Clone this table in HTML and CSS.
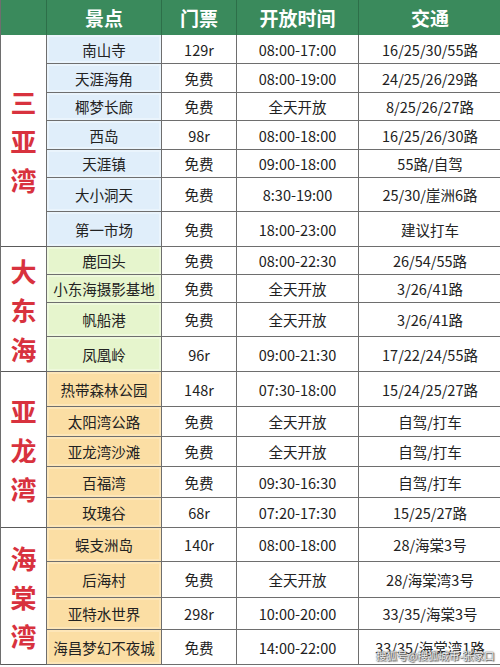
FILE: index.html
```html
<!DOCTYPE html>
<html lang="zh">
<head>
<meta charset="utf-8">
<link rel="stylesheet" href="styles.css">
</head>
<body>
<div class="page">
  <div class="table">
    <div class="hd"></div>
    <div class="hd">景点</div>
    <div class="hd">门票</div>
    <div class="hd">开放时间</div>
    <div class="hd last">交通</div>

    <div class="region span7">三<br>亚<br>湾</div>
    <div class="c blue">南山寺</div><div class="c">129r</div><div class="c">08:00-17:00</div><div class="c last">16/25/30/55路</div>
    <div class="c blue">天涯海角</div><div class="c">免费</div><div class="c">08:00-19:00</div><div class="c last">24/25/26/29路</div>
    <div class="c blue">椰梦长廊</div><div class="c">免费</div><div class="c">全天开放</div><div class="c last">8/25/26/27路</div>
    <div class="c blue">西岛</div><div class="c">98r</div><div class="c">08:00-18:00</div><div class="c last">16/25/26/30路</div>
    <div class="c blue">天涯镇</div><div class="c">免费</div><div class="c">09:00-18:00</div><div class="c last">55路/自驾</div>
    <div class="c blue">大小洞天</div><div class="c">免费</div><div class="c">8:30-19:00</div><div class="c last">25/30/崖洲6路</div>
    <div class="c blue">第一市场</div><div class="c">免费</div><div class="c">18:00-23:00</div><div class="c last">建议打车</div>

    <div class="region span4">大<br>东<br>海</div>
    <div class="c green">鹿回头</div><div class="c">免费</div><div class="c">08:00-22:30</div><div class="c last">26/54/55路</div>
    <div class="c green">小东海摄影基地</div><div class="c">免费</div><div class="c">全天开放</div><div class="c last">3/26/41路</div>
    <div class="c green">帆船港</div><div class="c">免费</div><div class="c">全天开放</div><div class="c last">3/26/41路</div>
    <div class="c green">凤凰岭</div><div class="c">96r</div><div class="c">09:00-21:30</div><div class="c last">17/22/24/55路</div>

    <div class="region span5">亚<br>龙<br>湾</div>
    <div class="c orange">热带森林公园</div><div class="c">148r</div><div class="c">07:30-18:00</div><div class="c last">15/24/25/27路</div>
    <div class="c orange">太阳湾公路</div><div class="c">免费</div><div class="c">全天开放</div><div class="c last">自驾/打车</div>
    <div class="c orange">亚龙湾沙滩</div><div class="c">免费</div><div class="c">全天开放</div><div class="c last">自驾/打车</div>
    <div class="c orange">百福湾</div><div class="c">免费</div><div class="c">09:30-16:30</div><div class="c last">自驾/打车</div>
    <div class="c orange">玫瑰谷</div><div class="c">68r</div><div class="c">07:20-17:30</div><div class="c last">15/25/27路</div>

    <div class="region span4">海<br>棠<br>湾</div>
    <div class="c orange">蜈支洲岛</div><div class="c">140r</div><div class="c">08:00-18:00</div><div class="c last">28/海棠3号</div>
    <div class="c orange">后海村</div><div class="c">免费</div><div class="c">全天开放</div><div class="c last">28/海棠湾3号</div>
    <div class="c orange">亚特水世界</div><div class="c">298r</div><div class="c">10:00-20:00</div><div class="c last">33/35/海棠3号</div>
    <div class="c orange">海昌梦幻不夜城</div><div class="c">免费</div><div class="c">14:00-22:00</div><div class="c last">33/35/海棠湾1路</div>
  </div>
  <div class="watermark">搜狐号@搜狐城市-张家口</div>
</div>
</body>
</html>
```

FILE: styles.css
```css
html, body {
  margin: 0;
  padding: 0;
  background: #ffffff;
}

.page {
  position: relative;
  width: 500px;
  height: 667px;
  overflow: hidden;
  font-family: "Noto Sans CJK SC", "Noto Sans", sans-serif;
  color: #222222;
}

.table {
  display: grid;
  grid-template-columns: 46px 115px 75px 122px 142px;
  grid-template-rows:
    35px
    29px 29px 28px 29px 28px 34px 35px
    28px 28px 34px 35px
    35px 30px 30px 31px 30px
    34px 36px 32px 35px;
  border-left: 1px solid #6e6e6e;
  box-sizing: border-box;
  width: 500px;
}

.hd {
  background: #3a8a5c;
  color: #ffffff;
  font-weight: 700;
  font-size: 19px;
  display: flex;
  align-items: center;
  justify-content: center;
  border-right: 1px solid #2d6f49;
  box-sizing: border-box;
}

.hd.last {
  border-right: none;
}

.c {
  display: flex;
  align-items: center;
  justify-content: center;
  font-size: 14.5px;
  border-right: 1px solid #6e6e6e;
  border-bottom: 1px solid #6e6e6e;
  box-sizing: border-box;
  white-space: nowrap;
}

.c.last {
  border-right: none;
}

.blue {
  background: #e0eefa;
  box-shadow: inset 0 0 0 2px #eaf4fc;
}

.green {
  background: #e6f5cd;
  box-shadow: inset 0 0 0 2px #eef9dc;
}

.orange {
  background: #fbdea4;
  box-shadow: inset 0 0 0 2px #fde6b8;
}

.region {
  grid-column: 1;
  display: flex;
  align-items: center;
  justify-content: center;
  text-align: center;
  color: #d8323e;
  font-weight: 700;
  font-size: 26px;
  line-height: 39px;
  border-right: 1px solid #6e6e6e;
  border-bottom: 1px solid #5a5a5a;
  box-sizing: border-box;
}

.span7 { grid-row: span 7; }
.span5 { grid-row: span 5; }
.span4 { grid-row: span 4; }

.watermark {
  position: absolute;
  left: 376px;
  top: 648px;
  font-size: 10.5px;
  color: rgba(255, 255, 255, 0.92);
  text-shadow: 0 0 1px #555, 0 0 2px #666, 1px 1px 1px #555;
  white-space: nowrap;
}
```
